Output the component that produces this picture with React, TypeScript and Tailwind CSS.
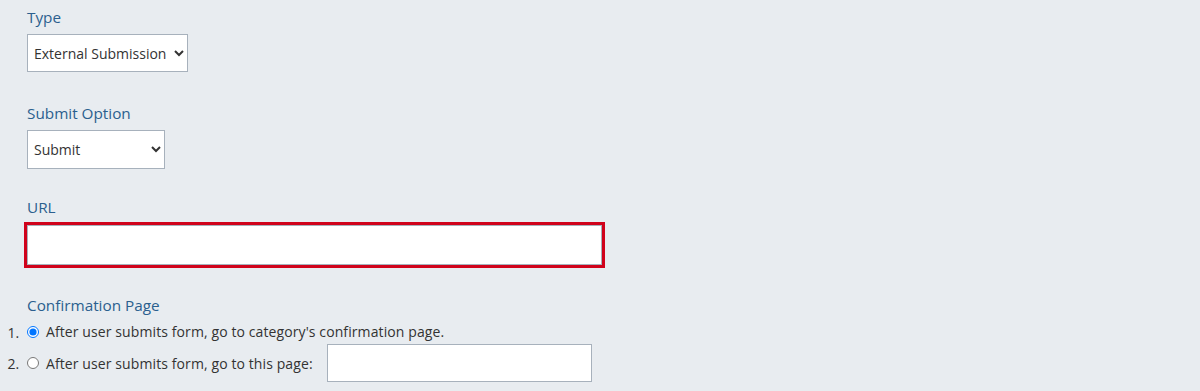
import React from 'react';

const labelStyle = "block text-[15.3px] leading-5 text-[#2b5f8e] mb-[7px]";
const fieldStyle = "h-[38px] border border-[#a7b1bc] bg-white text-[14px] text-[#333] pl-[2px] outline-none";

const App: React.FC = () => {
  return (
    <div
      className="w-[1200px] h-[391px] bg-[#e8ecf0] overflow-hidden"
      style={{ fontFamily: '"Open Sans", "Noto Sans", sans-serif' }}
    >
      <div className="pl-[27px] pt-[7px]">
        {/* Type */}
        <div>
          <label className={labelStyle}>Type</label>
          <select className={`${fieldStyle} w-[161px]`} defaultValue="external">
            <option value="external">External Submission</option>
            <option value="form">Form</option>
          </select>
        </div>

        {/* Submit option */}
        <div className="mt-[31px]">
          <label className={labelStyle}>Submit Option</label>
          <select className={`${fieldStyle} w-[138px] h-[39px]`} defaultValue="submit">
            <option value="submit">Submit</option>
          </select>
        </div>

        {/* URL */}
        <div className="mt-[28px]">
          <label className={`${labelStyle} !mb-[8px]`}>URL</label>
          <input
            type="text"
            className="block w-[575px] h-[40px] bg-white border border-[#a7b1bc] outline-[3px] outline-solid outline-[#d0021b]"
          />
        </div>

        {/* Confirmation page */}
        <div className="mt-[30px]">
          <label className={labelStyle}>Confirmation Page</label>
        </div>
      </div>

      <ol className="list-decimal pl-[23px] text-[14px] text-[#333] tracking-[0.1px]">
        <li className="leading-5">
          <label className="flex items-center">
            <input type="radio" name="confirm" defaultChecked className="m-0 ml-[4px] mr-[7px] w-[12px] h-[12px]" />
            After user submits form, go to category's confirmation page.
          </label>
        </li>
        <li className="mt-[2px]">
          <label className="flex items-center">
            <input type="radio" name="confirm" className="m-0 ml-[4px] mr-[7px] w-[12px] h-[12px]" />
            After user submits form, go to this page:
            <input
              type="text"
              className="ml-[14px] w-[265px] h-[38px] bg-white border border-[#a7b1bc] outline-none"
            />
          </label>
        </li>
      </ol>
    </div>
  );
};

export default App;
